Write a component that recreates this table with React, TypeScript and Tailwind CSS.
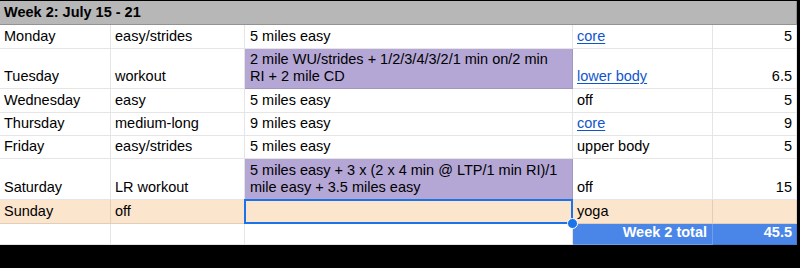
import type { ReactNode } from "react";

type Day = {
  day: string;
  type: string;
  run: ReactNode;
  extra: string;
  extraLink?: boolean;
  miles: string;
  height: string;
  hard?: boolean;
};

const week: Day[] = [
  { day: "Monday", type: "easy/strides", run: "5 miles easy", extra: "core", extraLink: true, miles: "5", height: "h-[24px]" },
  {
    day: "Tuesday",
    type: "workout",
    run: (
      <>
        2 mile WU/strides + 1/2/3/4/3/2/1 min on/2 min
        <br />
        RI + 2 mile CD
      </>
    ),
    extra: "lower body",
    extraLink: true,
    miles: "6.5",
    height: "h-[40px]",
    hard: true,
  },
  { day: "Wednesday", type: "easy", run: "5 miles easy", extra: "off", miles: "5", height: "h-[24px]" },
  { day: "Thursday", type: "medium-long", run: "9 miles easy", extra: "core", extraLink: true, miles: "9", height: "h-[23px]" },
  { day: "Friday", type: "easy/strides", run: "5 miles easy", extra: "upper body", miles: "5", height: "h-[23px]" },
  {
    day: "Saturday",
    type: "LR workout",
    run: (
      <>
        5 miles easy + 3 x (2 x 4 min @ LTP/1 min RI)/1
        <br />
        mile easy + 3.5 miles easy
      </>
    ),
    extra: "off",
    miles: "15",
    height: "h-[41px]",
    hard: true,
  },
];

const cols = "grid grid-cols-[111px_134px_328px_140px_84px]";

function Cell({ children, className = "" }: { children?: ReactNode; className?: string }) {
  return (
    <div
      className={`flex items-end border-r border-b border-black/10 px-[4px] pb-[3px] leading-[17px] whitespace-nowrap ${className}`}
    >
      {children}
    </div>
  );
}

function Link({ children }: { children: ReactNode }) {
  return <span className="text-[#1155cc] underline underline-offset-[2px]">{children}</span>;
}

export default function App() {
  return (
    <div className="w-[800px] h-[268px] bg-black pt-[1px] overflow-hidden">
      <div
        className="w-[797px] bg-white text-black text-[14.5px]"
        style={{ fontFamily: '"Liberation Sans", Arial, sans-serif' }}
      >
        {/* sheet title row */}
        <div className="h-[24px] flex items-end bg-[#b7b7b7] border-b border-r border-black/20 px-[4px] pb-[3px] font-bold leading-[17px]">
          Week 2: July 15 - 21
        </div>

        {week.map((d) => (
          <div key={d.day} className={`${cols} ${d.height}`}>
            <Cell>{d.day}</Cell>
            <Cell>{d.type}</Cell>
            <Cell className={d.hard ? "bg-[#b4a7d6] pl-[5px]" : "pl-[5px]"}>{d.run}</Cell>
            <Cell>{d.extraLink ? <Link>{d.extra}</Link> : d.extra}</Cell>
            <Cell className="justify-end">{d.miles}</Cell>
          </div>
        ))}

        {/* rest day */}
        <div className={`${cols} h-[24px] bg-[#fce5cd]`}>
          <Cell>Sunday</Cell>
          <Cell>off</Cell>
          <Cell className="relative">
            <div className="absolute -left-px -top-px -right-px -bottom-px border-2 border-[#1a73e8]" />
            <div className="absolute -right-[6px] -bottom-[6px] w-[11px] h-[11px] rounded-full bg-[#1a73e8] border border-white z-10" />
          </Cell>
          <Cell>yoga</Cell>
          <Cell />
        </div>

        {/* weekly total */}
        <div className={`${cols} h-[21px]`}>
          <Cell />
          <Cell />
          <Cell />
          <Cell className="justify-end bg-[#4a86e8] text-white font-bold border-white/20 pr-[5px] pb-[2px]">Week 2 total</Cell>
          <Cell className="justify-end bg-[#4a86e8] text-white font-bold border-[#4a86e8] pb-[2px]">45.5</Cell>
        </div>
      </div>
    </div>
  );
}
